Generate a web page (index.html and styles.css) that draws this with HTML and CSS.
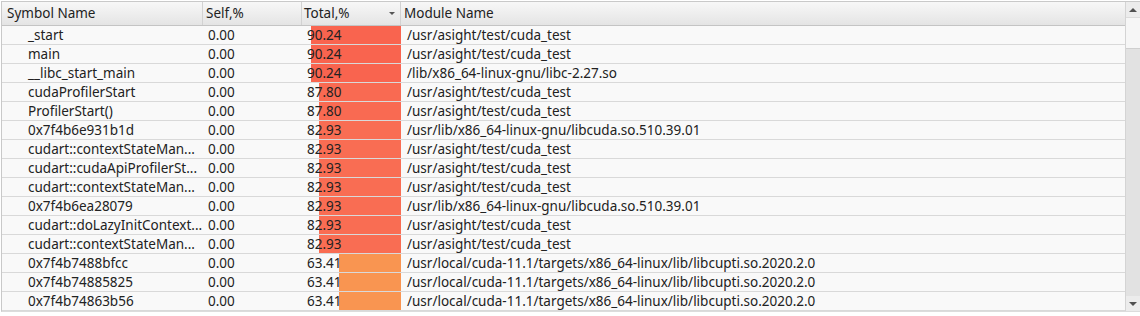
FILE: index.html
```html
<!DOCTYPE html>
<html>
<head>
<meta charset="utf-8">
<link rel="stylesheet" href="styles.css">
</head>
<body>
<div class="view">
  <div class="table">
    <div class="row head">
      <div class="cell c-sym">Symbol Name</div>
      <div class="cell c-self">Self,%</div>
      <div class="cell c-total">Total,%<span class="sort"></span></div>
      <div class="cell c-mod">Module Name</div>
    </div>
    <div class="row"><div class="cell c-sym">_start</div><div class="cell c-self">0.00</div><div class="cell c-total"><span class="bar b1" style="width:90px"></span><span class="num">90.24</span></div><div class="cell c-mod">/usr/asight/test/cuda_test</div></div>
    <div class="row"><div class="cell c-sym">main</div><div class="cell c-self">0.00</div><div class="cell c-total"><span class="bar b1" style="width:90px"></span><span class="num">90.24</span></div><div class="cell c-mod">/usr/asight/test/cuda_test</div></div>
    <div class="row"><div class="cell c-sym">__libc_start_main</div><div class="cell c-self">0.00</div><div class="cell c-total"><span class="bar b1" style="width:90px"></span><span class="num">90.24</span></div><div class="cell c-mod">/lib/x86_64-linux-gnu/libc-2.27.so</div></div>
    <div class="row"><div class="cell c-sym">cudaProfilerStart</div><div class="cell c-self">0.00</div><div class="cell c-total"><span class="bar b2" style="width:82px"></span><span class="num">87.80</span></div><div class="cell c-mod">/usr/asight/test/cuda_test</div></div>
    <div class="row"><div class="cell c-sym">ProfilerStart()</div><div class="cell c-self">0.00</div><div class="cell c-total"><span class="bar b2" style="width:82px"></span><span class="num">87.80</span></div><div class="cell c-mod">/usr/asight/test/cuda_test</div></div>
    <div class="row"><div class="cell c-sym">0x7f4b6e931b1d</div><div class="cell c-self">0.00</div><div class="cell c-total"><span class="bar b3" style="width:82px"></span><span class="num">82.93</span></div><div class="cell c-mod">/usr/lib/x86_64-linux-gnu/libcuda.so.510.39.01</div></div>
    <div class="row"><div class="cell c-sym">cudart::contextStateMan...</div><div class="cell c-self">0.00</div><div class="cell c-total"><span class="bar b3" style="width:82px"></span><span class="num">82.93</span></div><div class="cell c-mod">/usr/asight/test/cuda_test</div></div>
    <div class="row"><div class="cell c-sym">cudart::cudaApiProfilerSt...</div><div class="cell c-self">0.00</div><div class="cell c-total"><span class="bar b3" style="width:82px"></span><span class="num">82.93</span></div><div class="cell c-mod">/usr/asight/test/cuda_test</div></div>
    <div class="row"><div class="cell c-sym">cudart::contextStateMan...</div><div class="cell c-self">0.00</div><div class="cell c-total"><span class="bar b3" style="width:82px"></span><span class="num">82.93</span></div><div class="cell c-mod">/usr/asight/test/cuda_test</div></div>
    <div class="row"><div class="cell c-sym">0x7f4b6ea28079</div><div class="cell c-self">0.00</div><div class="cell c-total"><span class="bar b3" style="width:82px"></span><span class="num">82.93</span></div><div class="cell c-mod">/usr/lib/x86_64-linux-gnu/libcuda.so.510.39.01</div></div>
    <div class="row"><div class="cell c-sym">cudart::doLazyInitContext...</div><div class="cell c-self">0.00</div><div class="cell c-total"><span class="bar b3" style="width:82px"></span><span class="num">82.93</span></div><div class="cell c-mod">/usr/asight/test/cuda_test</div></div>
    <div class="row"><div class="cell c-sym">cudart::contextStateMan...</div><div class="cell c-self">0.00</div><div class="cell c-total"><span class="bar b3" style="width:82px"></span><span class="num">82.93</span></div><div class="cell c-mod">/usr/asight/test/cuda_test</div></div>
    <div class="row"><div class="cell c-sym">0x7f4b7488bfcc</div><div class="cell c-self">0.00</div><div class="cell c-total"><span class="bar b4" style="width:62px"></span><span class="num">63.41</span></div><div class="cell c-mod">/usr/local/cuda-11.1/targets/x86_64-linux/lib/libcupti.so.2020.2.0</div></div>
    <div class="row"><div class="cell c-sym">0x7f4b74885825</div><div class="cell c-self">0.00</div><div class="cell c-total"><span class="bar b4" style="width:62px"></span><span class="num">63.41</span></div><div class="cell c-mod">/usr/local/cuda-11.1/targets/x86_64-linux/lib/libcupti.so.2020.2.0</div></div>
    <div class="row"><div class="cell c-sym">0x7f4b74863b56</div><div class="cell c-self">0.00</div><div class="cell c-total"><span class="bar b4" style="width:62px"></span><span class="num">63.41</span></div><div class="cell c-mod">/usr/local/cuda-11.1/targets/x86_64-linux/lib/libcupti.so.2020.2.0</div></div>
  </div>
  <div class="scrollbar">
    <div class="sb-btn"><span class="tri-up"></span></div>
    <div class="sb-thumb"></div>
    <div class="sb-track"></div>
    <div class="sb-btn"><span class="tri-down"></span></div>
  </div>
</div>
</body>
</html>
```

FILE: styles.css
```css
html, body {
  margin: 0;
  padding: 0;
  background: #ffffff;
}
body {
  font-family: "Noto Sans", "Open Sans", sans-serif;
  font-size: 13.5px;
  color: #222222;
}
.view {
  display: flex;
  margin: 1px 0 0 1px;
  border-top: 1px solid #c9c9c9;
  border-left: 1px solid #c9c9c9;
  border-bottom: 1px solid #dcdcdc;
  background: #f9f9f9;
}
.table {
  flex: 1;
  display: flex;
  flex-direction: column;
  min-width: 0;
  border-right: 1px solid #d4d4d4;
}
.row {
  display: flex;
  height: 18px;
  border-bottom: 1px solid #d9d9d9;
  background: #f9f9f9;
}
.row.head {
  height: 23px;
  border-bottom: 1px solid #c4c4c4;
  background: linear-gradient(#f7f7f7, #ececec 60%, #e4e4e4);
}
.cell {
  position: relative;
  display: flex;
  align-items: center;
  white-space: nowrap;
  overflow: hidden;
  line-height: 18px;
}
.head .cell {
  border-right: 1px solid #d2d2d2;
  line-height: 23px;
}
.c-sym { width: 201px; padding-left: 26px; box-sizing: border-box; }
.c-self { width: 99px; padding-left: 5px; box-sizing: border-box; }
.c-total { width: 99px; padding-left: 5px; box-sizing: border-box; }
.c-mod { flex: 1; padding-left: 6px; }
.head .c-sym { padding-left: 5px; width: 201px; }
.head .c-self { padding-left: 3px; width: 99px; }
.head .c-total { padding-left: 2px; width: 99px; }
.head .c-mod { padding-left: 3px; border-right: none; }
.sort {
  position: absolute;
  right: 5px;
  top: 10px;
  width: 0;
  height: 0;
  border-left: 3px solid transparent;
  border-right: 3px solid transparent;
  border-top: 3px solid #555555;
}
.bar {
  position: absolute;
  right: 0;
  top: 0;
  bottom: -1px;
}
.b1 { background: #f9644f; }
.b2 { background: #f96a52; }
.b3 { background: #f96d53; }
.b4 { background: #f99551; }
.num { position: relative; }
.scrollbar {
  width: 14px;
  display: flex;
  flex-direction: column;
  background: #e3e3e3;
}
.sb-btn {
  height: 15px;
  display: flex;
  align-items: center;
  justify-content: center;
  background: #ececec;
}
.sb-thumb {
  height: 30px;
  background: #f6f6f6;
  border-top: 1px solid #dcdcdc;
  border-bottom: 1px solid #cfcfcf;
}
.sb-track {
  flex: 1;
  background: #e2e2e2;
}
.tri-up {
  width: 0;
  height: 0;
  border-left: 4px solid transparent;
  border-right: 4px solid transparent;
  border-bottom: 4px solid #505050;
}
.tri-down {
  width: 0;
  height: 0;
  border-left: 4px solid transparent;
  border-right: 4px solid transparent;
  border-top: 4px solid #505050;
}
```
